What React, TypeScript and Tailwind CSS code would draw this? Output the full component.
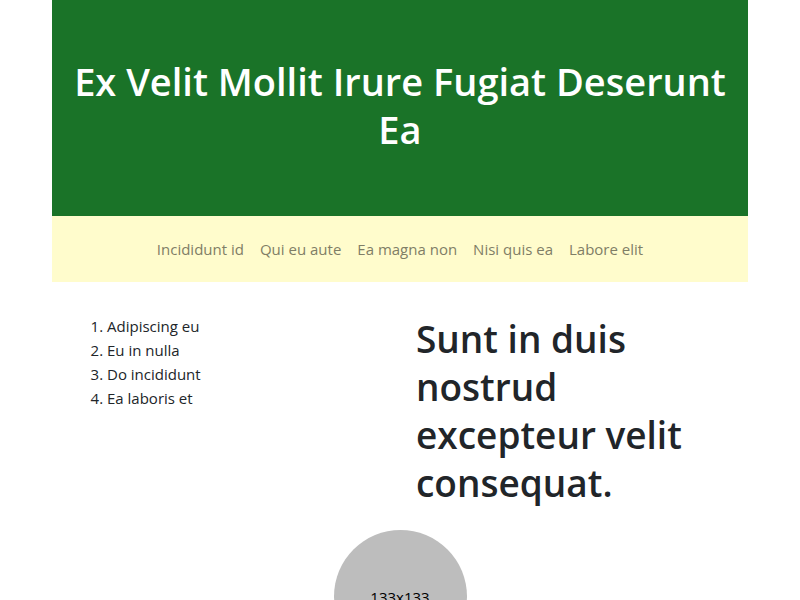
const links = ["Incididunt id", "Qui eu aute", "Ea magna non", "Nisi quis ea", "Labore elit"];
const items = ["Adipiscing eu", "Eu in nulla", "Do incididunt", "Ea laboris et"];

export default function App() {
  return (
    <div className="min-h-screen bg-white font-['Segoe_UI','Open_Sans',sans-serif] text-[15px] leading-6 text-[#212529]">
      <div className="mx-auto w-[87%]">
        <header className="bg-[#1a7328] px-4 pt-[57px] pb-[63px] text-center text-white">
          <h1 className="text-[38px] leading-[48px] font-semibold">Ex Velit Mollit Irure Fugiat Deserunt Ea</h1>
        </header>
        <nav className="flex justify-center gap-4 bg-[#fffccc] px-4 py-[21px] text-[#7f7e66]">
          {links.map((link) => (
            <a key={link} href="#">{link}</a>
          ))}
        </nav>
        <main className="pt-8 pb-8">
          <div className="grid grid-cols-2">
            <ol className="list-decimal pl-[55px]">
              {items.map((item) => (
                <li key={item}>{item}</li>
              ))}
            </ol>
            <h2 className="px-4 pt-px text-[37px] leading-[48px] font-semibold">
              Sunt in duis nostrud excepteur velit consequat.
            </h2>
          </div>
          <div className="mx-auto mt-[23px] flex size-[133px] items-center justify-center rounded-full bg-[#bdbdbd] text-black">133x133</div>
        </main>
      </div>
    </div>
  );
}
